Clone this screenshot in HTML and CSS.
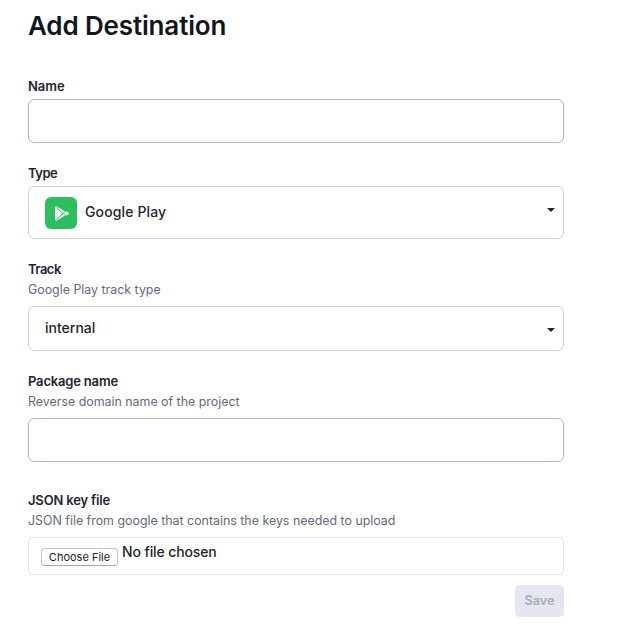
FILE: index.html
```
<!DOCTYPE html>
<html lang="en">
<head>
<meta charset="utf-8">
<title>Add Destination</title>
<link rel="stylesheet" href="styles.css">
</head>
<body>
<form class="form">
  <h1 class="title">Add Destination</h1>
  <section class="field name">
    <label class="label label-short" for="name">Name</label>
    <input class="input" id="name" type="text">
  </section>
  <section class="field type">
    <span class="label label-type">Type</span>
    <div class="select select-large">
      <svg class="logo" viewBox="0 0 32 32">
        <rect width="32" height="32" rx="6" fill="#2dbe60"/>
        <path d="M10 9.500v14l7.200-7z" fill="#fff"/>
        <path d="M10.800 9.200 19.800 14.600 18.200 15.900zM10.800 23.800l9-5.400-1.600-1.300z" fill="#fff" stroke="#fff" stroke-width=".4" stroke-linejoin="round"/>
        <path d="M19 16.500l2.200-1.700 2.800 1.700-2.800 1.700z" fill="#fff" stroke="#fff" stroke-width=".8" stroke-linejoin="round"/>
      </svg>
      <span class="value value-type">Google Play</span>
      <i class="caret"></i>
    </div>
  </section>
  <section class="field track">
    <span class="label label-type">Track</span>
    <p class="hint">Google Play track type</p>
    <div class="select">
      <span class="value value-track">internal</span>
      <i class="caret"></i>
    </div>
  </section>
  <section class="field package">
    <label class="label" for="package">Package name</label>
    <p class="hint">Reverse domain name of the project</p>
    <input class="input" id="package" type="text">
  </section>
  <section class="field json">
    <span class="label">JSON key file</span>
    <p class="hint">JSON file from google that contains the keys needed to upload</p>
    <div class="file">
      <button class="choose" type="button">Choose File</button>
      <span class="status">No file chosen</span>
    </div>
  </section>
  <button class="save" type="button" disabled>Save</button>
</form>
</body>
</html>
```
FILE: styles.css
```
* { box-sizing: border-box; }
body { margin: 0; background: #fff; color: #22252f; font-family: Inter, "Liberation Sans", sans-serif; }
.form { display: flex; flex-direction: column; width: 536px; margin-left: 28px; padding-top: 10px; }
.title { margin: 0; height: 68px; font-size: 26px; line-height: 32px; font-weight: 600; letter-spacing: -0.15px; color: #12151d; }
.field { display: flex; flex-direction: column; }
.label { height: 21px; line-height: 16px; font-size: 13px; font-weight: 600; letter-spacing: -0.18px; align-self: flex-start; }
.label-short { letter-spacing: 0; }
.label-type { letter-spacing: -0.5px; }
.hint { margin: 0; height: 24px; line-height: 15px; font-size: 12.4px; color: #636a7c; }
.input { height: 44px; padding: 0 16px; border: 1px solid #b0b7ce; border-radius: 6px; background: #fff; font: inherit; }
.name { height: 87px; }
.type { height: 96px; }
.track { height: 112px; }
.package { height: 119px; }
.select { display: flex; align-items: center; height: 45px; padding: 0 8px 0 16px; border: 1px solid #cad2e4; border-radius: 6px; }
.select-large { height: 53px; }
.logo { width: 32px; height: 32px; margin-right: 8px; }
.value, .status { font-size: 14px; line-height: 20px; font-weight: 500; }
.value { padding-bottom: 2px; }
.value-type { letter-spacing: 0.12px; }
.caret { margin-left: auto; border: 4px solid transparent; border-top-color: #22252f; border-bottom: 0; }
.select-large .caret { margin-bottom: 5px; }
.track .caret { margin-top: 3px; }
.file { display: flex; height: 38px; padding: 4px 12px; border: 1px solid #dfe2ec; border-radius: 4px; }
.choose { width: 77px; height: 18px; margin: 6px 4px 0 0; padding: 0; border: 1px solid #c4c4c4; border-bottom-color: #a8a8a8; border-radius: 4px; background: #fff; font: 11px/16px Inter, "Liberation Sans", sans-serif; color: #222; }
.status { letter-spacing: -0.12px; }
.save { align-self: flex-end; width: 49px; height: 32px; margin-top: 10px; padding: 0 0 2px; border: 0; border-radius: 5px; background: #e4e7ef; color: #a5abbc; font: 600 12.6px Inter, "Liberation Sans", sans-serif; }
```
